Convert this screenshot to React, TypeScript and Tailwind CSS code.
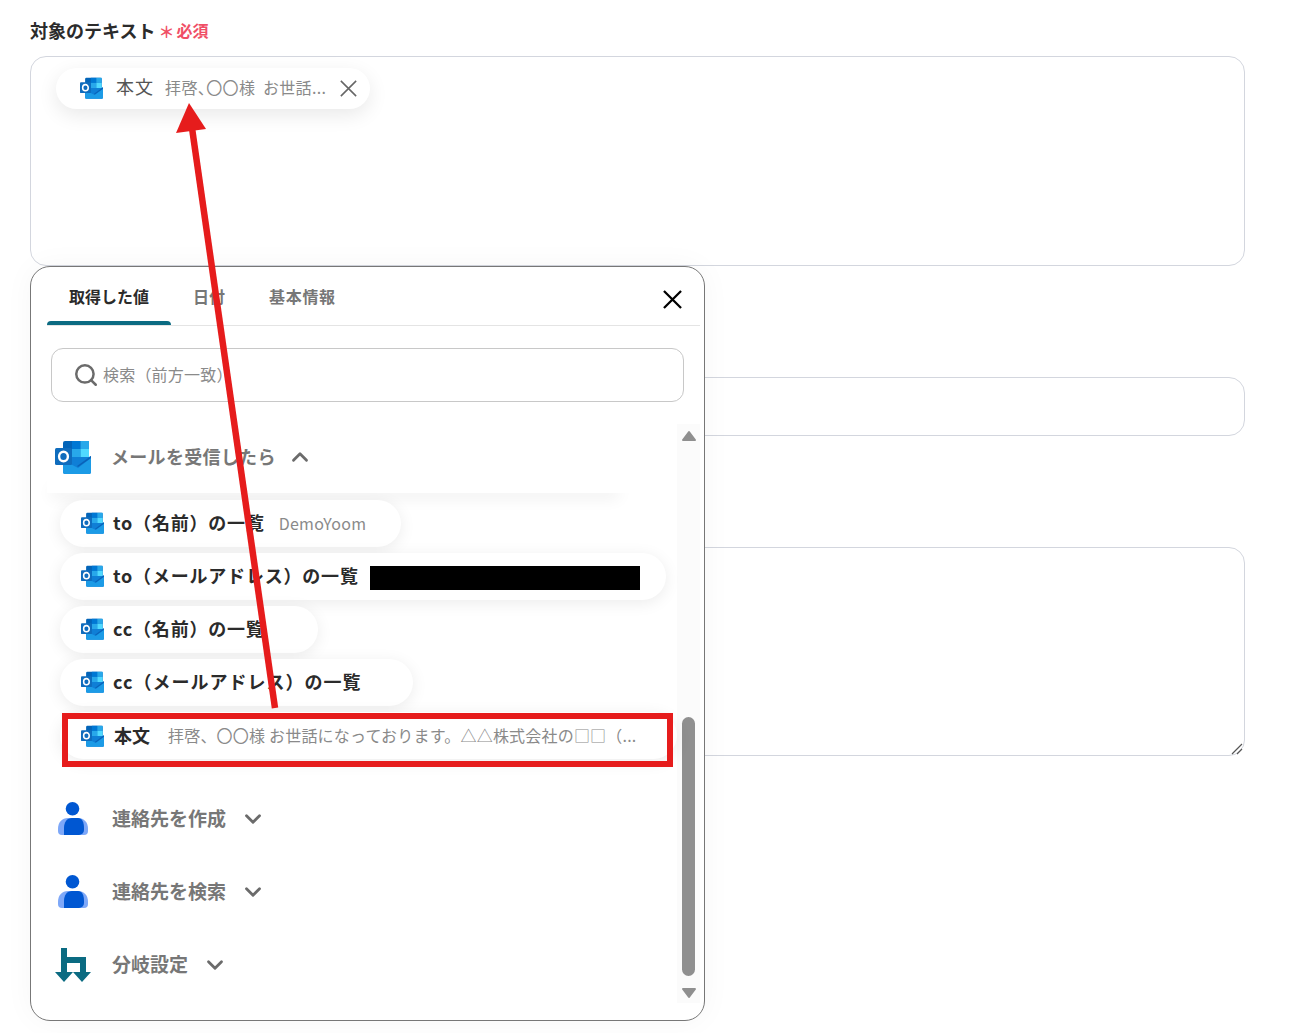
import { ChevronDown, ChevronUp, Search } from 'lucide-react';

const font = "font-['Noto_Sans_CJK_JP','Noto_Sans',sans-serif]";

function OutlookIcon({ className }: { className: string }) {
  return (
    <svg viewBox="0 0 36 34" className={className}>
      <path d="M10 1h22a2 2 0 0 1 2 2v14H8V3a2 2 0 0 1 2-2z" fill="#0364b8" />
      <rect x="17" y="1" width="8.5" height="8" fill="#0078d4" />
      <rect x="25.5" y="1" width="8.5" height="8" fill="#28a8ea" />
      <rect x="8" y="9" width="9" height="8" fill="#0078d4" />
      <rect x="17" y="9" width="8.5" height="8" fill="#28a8ea" />
      <rect x="25.5" y="9" width="8.5" height="8" fill="#50d9ff" />
      <path d="M8 17h26l2-1v16a2 2 0 0 1-2 2H10a2 2 0 0 1-2-2z" fill="#0f7fd6" />
      <path d="M8 20l15 8 13-10v14a2 2 0 0 1-2 2H10a2 2 0 0 1-2-2z" fill="#1c9be6" />
      <path d="M22 26l14-10v2l-13 9z" fill="#0a62b8" />
      <rect x="0" y="8" width="17" height="17" rx="1.5" fill="#0f6cbd" />
      <ellipse cx="8.5" cy="16.5" rx="4.4" ry="4.8" fill="none" stroke="#fff" strokeWidth="2.4" />
    </svg>
  );
}

function PersonIcon() {
  return (
    <svg viewBox="0 0 30 33" className="h-[33px] w-[30px]">
      <path d="M0 27c0-7 4-11 10-11h10c6 0 10 4 10 11v2a4 4 0 0 1-4 4H4a4 4 0 0 1-4-4z" fill="#7ea8f8" />
      <circle cx="14.5" cy="6.8" r="6.8" fill="#0057d2" />
      <path d="M6 26c0-6 3-10 8-10h6c4 0 6 4 6 10v2a5 5 0 0 1-5 5H6z" fill="#0057d2" />
    </svg>
  );
}

function BranchIcon() {
  return (
    <svg viewBox="0 0 36 36" className="size-9">
      <path d="M6 1h6v9h19v15h-6V16H12v9H6z" fill="#0b6b82" />
      <path d="M0 25h18l-9 10zM18 25h18l-9 10z" fill="#0b6b82" />
    </svg>
  );
}

function CloseIcon({ className, width }: { className: string; width: number }) {
  return (
    <svg viewBox="0 0 20 20" className={className}>
      <path d="M1 1l18 18M19 1L1 19" stroke="currentColor" strokeWidth={width} fill="none" />
    </svg>
  );
}

function ScrollArrow({ d, className }: { d: string; className?: string }) {
  return (
    <svg viewBox="0 0 16 12" className={`h-[12px] w-[16px] ${className ?? ''}`}>
      <path d={d} fill="#8f8f8f" stroke="#8f8f8f" strokeWidth="2" strokeLinejoin="round" />
    </svg>
  );
}

function GroupRow({ icon, label }: { icon: React.ReactNode; label: string }) {
  return (
    <div className="flex h-[73px] items-center pl-[8px] pt-[2px]">
      <div className="flex w-9 justify-center">{icon}</div>
      <span className="ml-[21px] text-[19px] font-semibold text-[#777]">{label}</span>
      <ChevronDown className="ml-[14px] size-[26px] text-[#6b6b6b]" strokeWidth={2.6} />
    </div>
  );
}

const pills = [
  { name: 'to（名前）の一覧', value: 'DemoYoom', width: 'w-[341px]', tracking: 'tracking-[0.8px]' },
  { name: 'to（メールアドレス）の一覧', redacted: true, width: 'w-[606px]', tracking: 'tracking-[0.8px]' },
  { name: 'cc（名前）の一覧', width: 'w-[258px]', tracking: 'tracking-[0.8px]' },
  { name: 'cc（メールアドレス）の一覧', width: 'w-[353px]', tracking: 'tracking-[1px]' },
];

export default function App() {
  return (
    <div className={`relative h-[1033px] w-[1297px] overflow-hidden bg-white ${font}`}>
      <div className="flex w-[1245px] flex-col pl-[30px] pt-[18px]">
        <div className="flex h-[24px] items-center">
          <span className="text-[18px] font-bold leading-[24px] text-[#2b2b2b]">対象のテキスト</span>
          <span className="ml-[3px] mt-[2px] w-[15px] text-[16px] font-bold leading-[24px] text-[#f04f66]">＊</span>
          <span className="ml-[3px] text-[16px] font-bold text-[#f04f66]">必須</span>
        </div>
        <div className="mt-[14px] h-[210px] rounded-[16px] border border-[#d3d6de] pl-[25px] pt-[11px]">
          <div className="flex h-[41px] w-[314px] items-center rounded-full bg-white pb-[1px] pl-[24px] shadow-[0_6px_20px_rgba(0,0,0,0.09)]">
            <OutlookIcon className="h-[22px] w-[23px]" />
            <span className="mb-[3px] ml-[13px] text-[18px] tracking-[1px] text-[#555]">本文</span>
            <span className="mb-[2px] ml-[11px] w-[162px] whitespace-nowrap text-[16px] tracking-[0.4px] text-[#8a8a8a] [font-feature-settings:'palt'] [word-spacing:4px]">
              拝啓、〇〇様 お世話...
            </span>
            <CloseIcon className="ml-[13px] size-[17px] text-[#666]" width={1.8} />
          </div>
        </div>
        <input className="mt-[111px] h-[59px] rounded-[16px] border border-[#d3d6de] bg-white" />
        <div className="relative mt-[111px] h-[209px]">
          <textarea className="block h-full w-full resize-none rounded-[16px] border border-[#d3d6de] bg-white" />
          <svg viewBox="0 0 12 12" className="absolute bottom-[1px] right-[2px] size-[12px]">
            <path d="M1 11L11 1M6 11l5-5" stroke="#555" strokeWidth="1.2" fill="none" />
          </svg>
        </div>
      </div>

      <div className="absolute left-[30px] top-[266px] flex h-[755px] w-[675px] flex-col rounded-[20px] border border-[#777] bg-white pl-[16px] pr-[4px] shadow-[0_0_30px_rgba(0,0,0,0.04)]">
        <div className="flex h-[59px] shrink-0 items-end border-b border-[#e4e4e4] text-[16px] font-semibold">
          <div className="flex h-[58px] w-[124px] flex-col text-[#2b2b2b]">
            <div className="flex flex-1 items-center justify-center pt-[4px]">取得した値</div>
            <div className="h-[4px] rounded-t-[4px] bg-[#0b6b82]" />
          </div>
          <div className="flex h-[58px] items-center pl-[22px] text-[#777]">日付</div>
          <div className="flex h-[58px] items-center pl-[44px] tracking-[0.7px] text-[#777]">基本情報</div>
          <CloseIcon className="mb-[16px] ml-auto mr-[18px] size-[19px] text-black" width={2.4} />
        </div>

        <div className="ml-[4px] mr-[16px] mt-[22px] flex h-[54px] shrink-0 items-center rounded-[12px] border border-[#c8c8c8] pl-[21px]">
          <Search className="size-[26px] text-[#6b6b6b]" strokeWidth={2.3} />
          <span className="mb-[2px] ml-[4px] text-[16px] tracking-[0.2px] text-[#8a8a8a]">検索（前方一致）</span>
        </div>

        <div className="mt-[22px] flex h-[579px] shrink-0">
          <div className="w-[630px]">
            <div className="relative z-10 flex h-[69px] items-center bg-white pb-[3px] pl-[8px]">
              <OutlookIcon className="h-[34px] w-9" />
              <span className="mb-[2px] ml-[20px] text-[18px] font-semibold tracking-[0.3px] text-[#777]">メールを受信したら</span>
              <ChevronUp className="ml-[11px] size-[26px] text-[#6b6b6b]" strokeWidth={2.6} />
            </div>
            <div className="ml-[8px] h-0 w-[560px] shadow-[0_0_16px_4px_rgba(0,0,0,0.09)]" />

            <div className="relative ml-[13px] mt-[7px] flex flex-col gap-[6px]">
              {pills.map((pill) => (
                <div
                  key={pill.name}
                  className={`flex h-[47px] items-center rounded-full bg-white pb-[2px] pl-[21px] shadow-[0_3px_16px_rgba(0,0,0,0.08)] ${pill.width}`}
                >
                  <OutlookIcon className="h-[22px] w-[23px] shrink-0" />
                  <span className={`ml-[9px] text-[18px] font-semibold text-[#2b2b2b] ${pill.tracking}`}>{pill.name}</span>
                  {pill.value && <span className="ml-[14px] text-[16px] tracking-[0.25px] text-[#8a8a8a]">{pill.value}</span>}
                  {pill.redacted && <span className="ml-[11px] mt-[4px] h-[24px] w-[270px] bg-black" />}
                </div>
              ))}
              <div className="flex h-[47px] w-[617px] items-center rounded-full bg-white pl-[21px] shadow-[0_3px_16px_rgba(0,0,0,0.08)]">
                <OutlookIcon className="h-[22px] w-[23px] shrink-0" />
                <span className="ml-[10px] text-[18px] font-bold text-[#2b2b2b]">本文</span>
                <span className="mb-[2px] ml-[18px] whitespace-nowrap text-[16px] tracking-[0.2px] text-[#8a8a8a]">
                  拝啓、〇〇様 お世話になっております。△△株式会社の□□（...
                </span>
              </div>
            </div>

            <div className="mt-[22px]">
              <GroupRow icon={<PersonIcon />} label="連絡先を作成" />
              <GroupRow icon={<PersonIcon />} label="連絡先を検索" />
              <GroupRow icon={<BranchIcon />} label="分岐設定" />
            </div>
          </div>

          <div className="flex w-[23px] flex-col items-center bg-[#fbfbfb] pt-[6px]">
            <ScrollArrow d="M8 2L14 10H2z" />
            <div className="mt-[275px] h-[259px] w-[13px] shrink-0 rounded-full bg-[#8f8f8f]" />
            <ScrollArrow d="M8 10L14 2H2z" className="mt-[11px]" />
          </div>
        </div>
      </div>

      {/* annotation drawn over the screenshot */}
      <div className="pointer-events-none absolute left-[62px] top-[713px] z-20 h-[54px] w-[611px] border-[6px] border-[#e61c1c]" />
      <svg className="pointer-events-none absolute left-0 top-0 z-20" width="1297" height="1033">
        <path d="M275 708L192 128" stroke="#e61c1c" strokeWidth="6.5" fill="none" />
        <path d="M189 103L176 133L206 129z" fill="#e61c1c" />
      </svg>
    </div>
  );
}
